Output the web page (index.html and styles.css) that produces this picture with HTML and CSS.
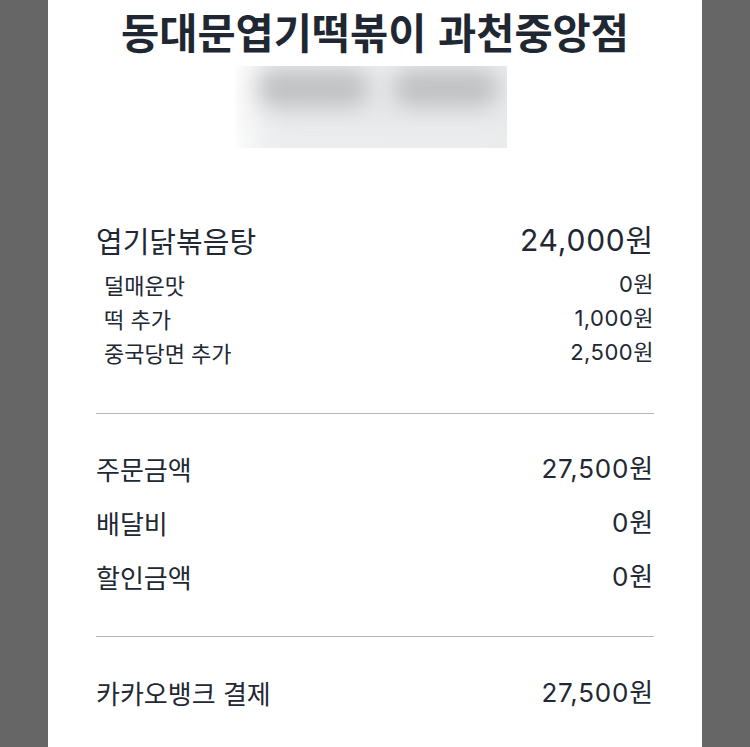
FILE: index.html
```html
<!DOCTYPE html>
<html lang="ko">
<head>
<meta charset="utf-8">
<link rel="stylesheet" href="styles.css">
</head>
<body>
<div class="card">
  <h1 class="title">동대문엽기떡볶이 과천중앙점</h1>
  <div class="blur-box">
    <div class="blur-inner">
      <span class="blob blob-a"></span>
      <span class="blob blob-b"></span>
    </div>
  </div>

  <div class="item">
    <div class="row main-row"><span>엽기닭볶음탕</span><span class="num">24,000원</span></div>
    <div class="row sub-row"><span>덜매운맛</span><span class="num">0원</span></div>
    <div class="row sub-row"><span>떡 추가</span><span class="num">1,000원</span></div>
    <div class="row sub-row"><span>중국당면 추가</span><span class="num">2,500원</span></div>
  </div>

  <hr class="divider first">

  <div class="summary">
    <div class="row sum-row"><span>주문금액</span><span class="num">27,500원</span></div>
    <div class="row sum-row"><span>배달비</span><span class="num">0원</span></div>
    <div class="row sum-row"><span>할인금액</span><span class="num">0원</span></div>
  </div>

  <hr class="divider second">

  <div class="row sum-row pay"><span>카카오뱅크 결제</span><span class="num">27,500원</span></div>
</div>
</body>
</html>
```

FILE: styles.css
```css
html, body {
  margin: 0;
  padding: 0;
  background: #666666;
  height: 100%;
}
body {
  font-family: "Noto Sans CJK KR", "Noto Sans", sans-serif;
  color: #212833;
}
.card {
  width: 654px;
  margin: 0 auto;
  box-sizing: border-box;
  padding: 0 48px;
  background: #ffffff;
  min-height: 747px;
  overflow: hidden;
}
.title {
  margin: 6px 0 0;
  font-size: 41.5px;
  line-height: 50px;
  font-weight: 700;
  text-align: center;
  color: #1f2732;
}
.blur-box {
  width: 272px;
  height: 82px;
  margin: 10px 0 0 139px;
  background: linear-gradient(90deg, #ffffff 0%, #eeeff0 12%, #eaebec 100%);
  overflow: hidden;
}
.blur-inner {
  position: relative;
  width: 100%;
  height: 100%;
  background:
    linear-gradient(90deg, rgba(255,255,255,0.9) 0%, rgba(255,255,255,0) 14%),
    linear-gradient(180deg, #e9eaeb 0%, #e6e7e8 60%, #eeeff0 100%);
  filter: blur(11px);
}
.blob {
  position: absolute;
  border-radius: 18px;
  background: #bfc0c2;
}
.blob-a { left: 22px; top: 4px; width: 112px; height: 36px; }
.blob-b { left: 158px; top: 4px; width: 106px; height: 36px; }

.num {
  font-family: "Inter", "Noto Sans CJK KR", sans-serif;
  letter-spacing: 0.8px;
}
.row {
  display: flex;
  justify-content: space-between;
  align-items: center;
}
.item {
  margin-top: 72px;
}
.main-row {
  font-size: 29px;
  line-height: 40px;
  margin-bottom: 7px;
}
.main-row .num {
  font-size: 30px;
}
.sub-row {
  font-size: 22px;
  line-height: 34px;
  padding-left: 8px;
}
.sub-row .num {
  letter-spacing: 0.5px;
}
.divider {
  border: none;
  height: 1px;
  background: #b4b6ba;
  margin: 0;
}
.divider.first {
  margin-top: 44px;
}
.summary {
  margin-top: 28px;
}
.sum-row {
  font-size: 26px;
  line-height: 54px;
}
.divider.second {
  margin-top: 32px;
}
.pay {
  margin-top: 29px;
}
```
